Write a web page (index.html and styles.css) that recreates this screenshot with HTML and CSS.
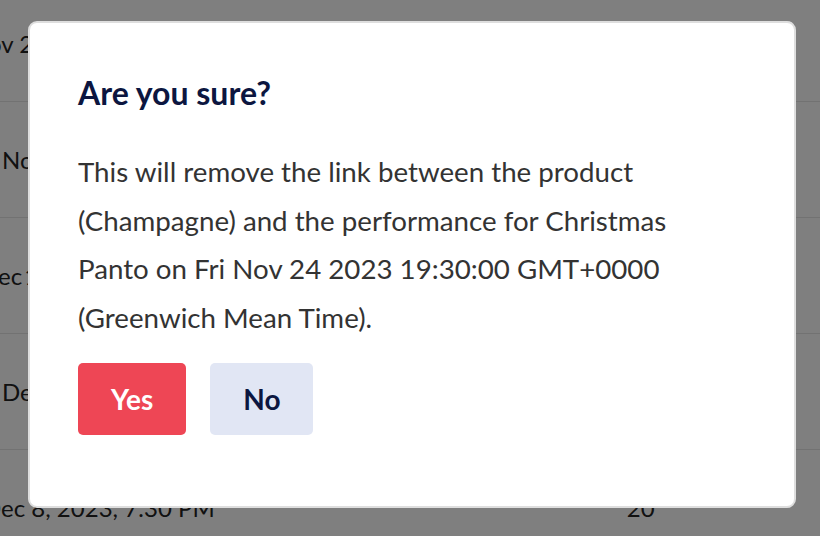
FILE: index.html
```html
<!DOCTYPE html>
<html>
<head>
<meta charset="utf-8">
<link rel="stylesheet" href="styles.css">
</head>
<body>
<div class="table">
  <div class="row r1"><span class="date">Nov 24, 2023, 7:30 PM</span></div>
  <div class="row r2"><span class="date">Nov 25, 2023, 2:30 PM</span></div>
  <div class="row r3"><span class="date">Dec 1, 2023, 7:30 PM</span></div>
  <div class="row r4"><span class="date">Dec 2, 2023, 2:30 PM</span></div>
  <div class="row r5"><span class="date">Dec 8, 2023, 7:30 PM</span><span class="qty">20</span></div>
</div>
<div class="overlay"></div>
<div class="modal">
  <h2 class="title">Are you sure?</h2>
  <p class="message">This will remove the link between the product (Champagne) and the performance for Christmas Panto on Fri Nov 24 2023 19:30:00 GMT+0000 (Greenwich Mean Time).</p>
  <div class="actions">
    <button class="btn btn-yes">Yes</button>
    <button class="btn btn-no">No</button>
  </div>
</div>
</body>
</html>
```
FILE: styles.css
```css
html, body {
  margin: 0;
  padding: 0;
  width: 820px;
  height: 536px;
  overflow: hidden;
  background: #ffffff;
  font-family: Lato, "Liberation Sans", sans-serif;
}
.table {
  display: flex;
  flex-direction: column;
  margin-top: -14px;
}
.row {
  height: 115px;
  flex: none;
  border-bottom: 1px solid #e4e4e4;
  display: flex;
  align-items: center;
  font-size: 24px;
  color: #222;
}
.r1 .date { margin-left: -30px; }
.r2 .date { margin-left: 2px; }
.r3 .date { margin-left: -20px; word-spacing: -4px; }
.r4 .date { margin-left: 2px; }
.r5 .date { margin-left: -17px; }
.qty { margin-left: 412px; }
.overlay {
  position: fixed;
  inset: 0;
  background: rgba(0, 0, 0, 0.5);
}
.modal {
  position: absolute;
  left: 28px;
  top: 21px;
  width: 768px;
  height: 487px;
  box-sizing: border-box;
  background: #fff;
  border: 2px solid #dedede;
  border-radius: 9px;
  padding: 0 48px;
  display: flex;
  flex-direction: column;
}
.title {
  margin: 50px 0 0;
  font-size: 32px;
  line-height: 40px;
  font-weight: 700;
  color: #0c1640;
}
.message {
  margin: 35px 0 0;
  max-width: 620px;
  font-size: 27.7px;
  line-height: 48.7px;
  color: #333;
}
.actions {
  display: flex;
  gap: 24px;
  margin-top: 20px;
}
.btn {
  height: 72px;
  padding: 0 33px;
  border: none;
  border-radius: 5px;
  font-family: Lato, "Liberation Sans", sans-serif;
  font-size: 28px;
  font-weight: 700;
}
.btn-yes {
  background: #ee4655;
  color: #fff;
}
.btn-no {
  background: #e1e6f4;
  color: #0c1640;
}
```
